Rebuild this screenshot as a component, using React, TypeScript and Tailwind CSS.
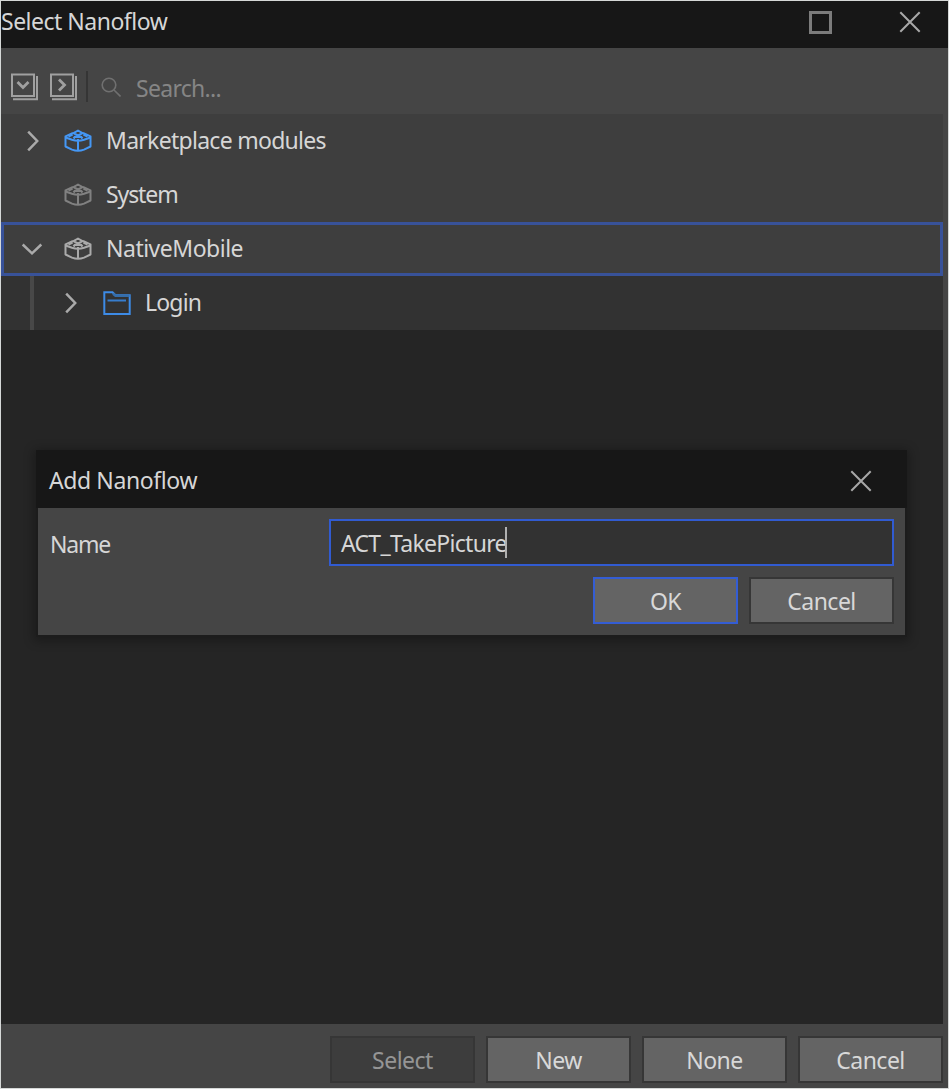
import type { ReactNode } from "react";

function Chevron({ open = false }: { open?: boolean }) {
  return (
    <svg className="h-6 w-6 shrink-0" viewBox="0 0 24 24" fill="none" stroke="#aaaaaa" strokeWidth="2.5">
      <path d={open ? "M2.7 7.5 12 16.3l9.3-8.8" : "M7.200 2.7 16.200 12l-9 9.3"} />
    </svg>
  );
}

function ModuleIcon({ className }: { className: string }) {
  return (
    <svg className={`h-6 w-7 shrink-0 ${className}`} viewBox="0 0 28 24" fill="none" stroke="currentColor" strokeWidth="2" strokeLinejoin="round">
      <path d="M9 4 1.500 7.300V17.500L8 20.600c4 1.500 8 1.500 12 0l6.500-3.100V7.300L19 4" />
      <path d="M1.500 8.500 8 10.800c4 1.300 8 1.300 12 0l6.500-2.300M14 10v11.500" />
      <path d="M9.500 4.200 14 1.500l4.500 2.700-4.500 2.300Z" />
      <path d="M4.500 7.600 8.500 5.500M23.500 7.600l-4-2.100" strokeWidth="2.200" />
      <path d="M9.500 9.500 11 7.800h6l1.500 1.700" strokeWidth="2.200" />
    </svg>
  );
}

function FolderIcon() {
  return (
    <svg className="h-6 w-7 shrink-0" viewBox="0 0 28 24" fill="none" stroke="#3d8be6" strokeWidth="2">
      <path d="M1.300 23V1.300h8.200l3 3h14.200V23Z" />
      <path d="M10 2.800l2.500 2h14" stroke="#356da9" strokeWidth="2.500" />
      <path d="M4.500 9.500h18.500" stroke="#377dcd" />
    </svg>
  );
}

function StackIcon({ right = false }: { right?: boolean }) {
  return (
    <svg className="h-7 w-7" viewBox="0 0 28 28" fill="none" stroke="#a0a0a0" strokeWidth="2">
      <path d="M2 1.500h22v21.500H2Z" />
      <path d="M27 3v23.300H3" />
      <path d={right ? "M10 6.500 15.500 12 10 17.500" : "M7.500 9l5.500 5.500L18.500 9"} strokeWidth="2.800" />
    </svg>
  );
}

function CloseIcon() {
  return (
    <svg className="h-[22px] w-[22px]" viewBox="0 0 22 22" fill="none" stroke="#a8a8a8" strokeWidth="2">
      <path d="M1.300 1.300l19.400 19.400M20.700 1.300 1.300 20.700" />
    </svg>
  );
}

function Button({ children, kind = "normal" }: { children: ReactNode; kind?: "normal" | "primary" | "disabled" }) {
  const look = {
    normal: "border-[#363636] bg-[#646464] text-[#d8d8d8]",
    primary: "border-[#345dd4] bg-[#646464] text-[#d8d8d8]",
    disabled: "border-[#363636] bg-[#3d3d3d] text-[#959595]",
  }[kind];
  return (
    <button className={`flex h-[47px] w-[145px] items-center justify-center border-2 pt-px tracking-[-0.5px] ${look}`}>
      {children}
    </button>
  );
}

export default function App() {
  return (
    <div className="relative flex h-[1089px] w-[949px] flex-col border border-[#d5d8d7] bg-[#454545] font-['Noto_Sans','Open_Sans',sans-serif] text-[23px] leading-[30px] text-[#d6d6d6]">
      <header className="flex h-[47px] shrink-0 items-center justify-between bg-[#171717] pr-[27px]">
        <h1 className="-mt-[8px] tracking-[-0.5px]">Select Nanoflow</h1>
        <div className="-mt-[5px] flex items-center gap-[67px]">
          <div className="h-[23px] w-[23px] border-[3px] border-[#7c7c7c]" />
          <CloseIcon />
        </div>
      </header>

      <div className="flex h-[66px] shrink-0 items-center pt-[11px] pl-[9px]">
        <div className="flex gap-[11px]">
          <StackIcon />
          <StackIcon right />
        </div>
        <div className="ml-[9px] h-[31px] w-[2px] bg-[#353535]" />
        <svg className="ml-[13px] h-5 w-5" viewBox="0 0 20 20" fill="none" stroke="#707070" strokeWidth="1.600">
          <circle cx="8" cy="8" r="6.800" />
          <path d="M13 13l6.500 6.500" />
        </svg>
        <span className="ml-[15px] mt-[3px] tracking-[-0.7px] text-[#858585]">Search...</span>
      </div>

      <main className="mr-[5px] flex min-h-0 flex-1 flex-col bg-[#252525]">
        <div className="flex h-[54px] items-center bg-[#3e3e3e] pl-5">
          <Chevron />
          <ModuleIcon className="ml-[19px] text-[#4597f4]" />
          <span className="ml-[14px] -mt-[2px] tracking-[-0.72px]">Marketplace modules</span>
        </div>
        <div className="flex h-[54px] items-center bg-[#3e3e3e] pl-[63px]">
          <ModuleIcon className="text-[#818181]" />
          <span className="ml-[14px] -mt-[2px] tracking-[-1.1px]">System</span>
        </div>
        <div className="flex h-[54px] items-center border-[3px] border-[#385299] bg-[#3e3e3e] pl-[16px]">
          <Chevron open />
          <ModuleIcon className="ml-5 text-[#aaaaaa]" />
          <span className="ml-[14px] -mt-[2px] tracking-[-0.5px]">NativeMobile</span>
        </div>
        <div className="flex h-[54px] items-center bg-[#323232] pl-[29px]">
          <div className="h-full w-[4px] bg-[#484848]" />
          <div className="ml-[25px]"><Chevron /></div>
          <div className="ml-[20px]"><FolderIcon /></div>
          <span className="ml-[14px] -mt-[2px] tracking-[-0.8px]">Login</span>
        </div>
      </main>

      <footer className="flex h-[64px] shrink-0 items-start justify-end gap-[11px] pt-[12px] pr-[5px]">
        <Button kind="disabled">Select</Button>
        <Button>New</Button>
        <Button>None</Button>
        <Button>Cancel</Button>
      </footer>

      <section role="dialog" className="absolute left-[35px] top-[449px] flex h-[187px] w-[871px] flex-col border-2 border-t-0 border-[#1c1c1c] bg-[#454545] shadow-[0_2px_10px_2px_rgba(0,0,0,0.3)]">
        <div className="-mx-[2px] flex h-[58px] shrink-0 items-center justify-between bg-[#171717] pl-[13px] pr-[35px]">
          <h2 className="mt-[2px] tracking-[-0.4px]">Add Nanoflow</h2>
          <div className="mt-[4px]"><CloseIcon /></div>
        </div>
        <div className="flex items-center justify-between pl-[12px] pr-[11px] pt-[11px]">
          <label className="mt-[3px] tracking-[-1.2px]">Name</label>
          <div className="flex h-[47px] w-[565px] items-center border-2 border-[#315bd1] bg-[#323232] pl-[10px]">
            <span className="mt-px tracking-[-0.7px]">ACT_TakePicture</span>
            <div className="-ml-[2px] h-[31px] w-[2px] bg-[#b0b0b0]" />
          </div>
        </div>
        <div className="flex justify-end gap-[11px] pr-[11px] pt-[11px]">
          <Button kind="primary">OK</Button>
          <Button>Cancel</Button>
        </div>
      </section>
    </div>
  );
}
